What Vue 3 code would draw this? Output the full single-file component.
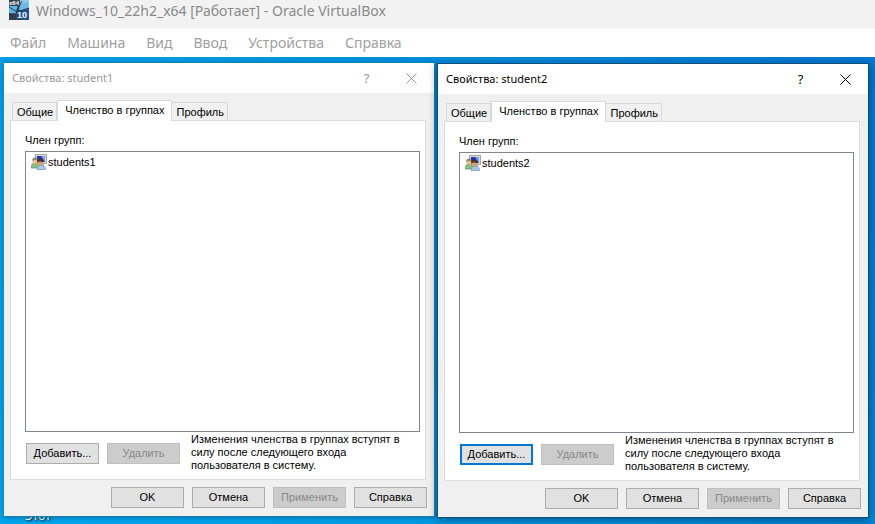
<script setup>
import { ref } from 'vue'

const menu = ['Файл', 'Машина', 'Вид', 'Ввод', 'Устройства', 'Справка']
const tabs = ['Общие', 'Членство в группах', 'Профиль']
const dialogs = ref([
  { user: 'student1', groups: ['students1'], active: false },
  { user: 'student2', groups: ['students2'], active: true }
])
</script>

<template>
  <div class="vm">
    <header class="caption">
      <svg class="vm-icon" viewBox="0 0 20 20" aria-hidden="true">
        <rect width="20" height="20" fill="#2b4a63" />
        <path d="M10 0H20V8L11 10Z" fill="#8cc9ec" />
        <path d="M0 6L9 4L7 13L0 14Z" fill="#5fb4e6" />
        <path d="M11 4L19 2V10H10Z" fill="#6bb8e8" />
        <path d="M0 13L7 14L9 20H0Z" fill="#333c46" />
        <path d="M8 11L20 9V20H7Z" fill="#1c4f94" />
        <path d="M13 1L7 12M0 7L8 12L20 8M8 12L10 20" stroke="#25384a" stroke-width="1" fill="none" />
        <rect width="11" height="6" fill="#39434d" />
        <text x="0" y="5" class="icon-arch">x64</text>
        <text x="8" y="18" class="icon-ver">10</text>
      </svg>
      <h1>Windows_10_22h2_x64 [Работает] - Oracle VirtualBox</h1>
    </header>
    <nav class="menu">
      <a v-for="m in menu" :key="m" href="#">{{ m }}</a>
    </nav>
    <main class="desktop">
      <span class="shortcut">Этот</span>
      <section
        v-for="d in dialogs"
        :key="d.user"
        class="dialog"
        :class="{ active: d.active }"
        role="dialog"
        :aria-labelledby="d.user + '-title'"
      >
        <div class="title-bar">
          <h2 :id="d.user + '-title'">Свойства: {{ d.user }}</h2>
          <button class="title-btn" type="button" aria-label="Справка по окну">?</button>
          <button class="title-btn" type="button" aria-label="Закрыть">
            <svg viewBox="0 0 11 11" aria-hidden="true"><path d="M.5.5L10.5 10.5M10.5.5L.5 10.5" /></svg>
          </button>
        </div>
        <div class="content">
          <div class="tabs" role="tablist">
            <button
              v-for="(t, i) in tabs"
              :key="t"
              type="button"
              role="tab"
              class="tab"
              :class="{ selected: i === 1 }"
              :aria-selected="i === 1"
            >{{ t }}</button>
          </div>
          <div class="panel" role="tabpanel">
            <div :id="d.user + '-label'" class="label">Член групп:</div>
            <ul class="list" role="listbox" :aria-labelledby="d.user + '-label'">
              <li v-for="g in d.groups" :key="g" role="option">
                <svg viewBox="0 0 16 16" aria-hidden="true">
                  <rect x="4.500" y=".5" width="11" height="9" fill="#dcd9cf" stroke="#aaa89f" />
                  <rect x="6" y="2" width="8" height="6" fill="#1c36b8" />
                  <path d="M10 2H14V8Z" fill="#7fa0ee" />
                  <path d="M8 10H13V12H8Z" fill="#b9b6ab" />
                  <path d="M0 14Q0 9 4 9Q8 9 8 14Z" fill="#8cc07c" stroke="#4d8a48" stroke-width=".6" />
                  <circle cx="4" cy="7" r="2.600" fill="#e3c193" />
                  <path d="M1.300 7Q1 3.500 4 3.500Q7 3.500 6.800 6.500Q4 5 1.300 7Z" fill="#8f8468" />
                  <path d="M6 15.500Q6 11 10 11Q14.500 11 14.500 15.500Z" fill="#a5c8ea" stroke="#5f8ab8" stroke-width=".6" />
                  <circle cx="9" cy="8.500" r="2.700" fill="#d8a066" />
                  <path d="M6.200 8.500Q5.500 4.500 9 4.600Q12.500 4.800 11.800 8.500Q9 6.500 6.200 8.500Z" fill="#4b3623" />
                </svg>
                <span>{{ g }}</span>
              </li>
            </ul>
            <div class="actions">
              <button type="button" class="btn" :class="{ focused: d.active }">Добавить...</button>
              <button type="button" class="btn" disabled>Удалить</button>
              <p>Изменения членства в группах вступят в силу после следующего входа пользователя в систему.</p>
            </div>
          </div>
          <div class="footer">
            <button type="button" class="btn">OK</button>
            <button type="button" class="btn">Отмена</button>
            <button type="button" class="btn" disabled>Применить</button>
            <button type="button" class="btn">Справка</button>
          </div>
        </div>
      </section>
    </main>
  </div>
</template>

<style>
body {
  background: #0095e0;
}
</style>

<style scoped>
.vm {
  display: flex;
  flex-direction: column;
  min-height: 100vh;
  font: 11px/13px "Liberation Sans", sans-serif;
  color: #000;
}
button {
  font: inherit;
  color: inherit;
  margin: 0;
}
.caption {
  display: flex;
  align-items: flex-start;
  gap: 7px;
  height: 29px;
  padding-left: 9px;
  background: #f2f2f2;
}
.vm-icon {
  width: 20px;
  height: 20px;
}
.icon-arch {
  font: bold 6px "Liberation Sans", sans-serif;
  fill: #fff;
}
.icon-ver {
  font: bold 9px "Liberation Sans", sans-serif;
  fill: #fff;
}
h1 {
  margin: 0;
  font: 14px/22px "Noto Sans", sans-serif;
  color: #8a8a8a;
  white-space: nowrap;
}
.menu {
  display: flex;
  gap: 21px;
  height: 28px;
  padding-left: 10px;
  background: #fff;
}
.menu a {
  font: 14px/28px "Noto Sans", sans-serif;
  color: #a0a0a0;
  text-decoration: none;
}
.desktop {
  position: relative;
  flex: 1;
  display: grid;
  grid-template-columns: 1fr 1fr;
  gap: 2px;
  align-items: start;
  padding: 5px 6px 6px 3px;
  overflow: hidden;
  background: linear-gradient(55deg, #00a6ee 0%, #0098e2 45%, #0078d2 100%);
}
.shortcut {
  position: absolute;
  left: 25px;
  top: 451px;
  font: 12px/16px "Noto Sans", sans-serif;
  color: #fff;
  text-shadow: 1px 1px 2px #000;
}
.dialog {
  position: relative;
  border: 1px solid #1b7fae;
  border-left-color: #1192d2;
  background: #f0f0f0;
  box-shadow: 0 1px 4px rgba(0, 30, 60, 0.35);
}
.dialog.active {
  margin-top: 1px;
  border-color: #0d4f7c;
  box-shadow: 0 2px 8px rgba(0, 20, 50, 0.5);
}
.title-bar {
  display: flex;
  align-items: center;
  height: 30px;
  padding-left: 8px;
  background: #fff;
  color: #999;
}
.active .title-bar {
  color: #000;
}
h2 {
  flex: 1;
  margin: 0;
  font: 11px/16px "Noto Sans", sans-serif;
}
.title-btn {
  display: flex;
  align-items: center;
  justify-content: center;
  width: 45px;
  height: 30px;
  padding: 0;
  border: 0;
  background: none;
  font: 13px/16px "Noto Sans", sans-serif;
}
.title-btn svg {
  width: 11px;
  height: 11px;
  fill: none;
  stroke: currentColor;
}
.content {
  padding: 7px 7px 8px 6px;
}
.tabs {
  display: flex;
  align-items: flex-end;
  padding-left: 2px;
}
.tab {
  height: 18px;
  padding: 1px 3px 0 4px;
  border: 1px solid #d9d9d9;
  border-bottom: 0;
  background: #f0f0f0;
  white-space: nowrap;
}
.tab + .tab {
  border-left: 0;
}
.tab.selected {
  position: relative;
  height: 21px;
  margin-bottom: -1px;
  padding: 0 7px 2px;
  border-left: 1px solid #d9d9d9;
  background: #fff;
}
.panel {
  margin-right: 1px;
  padding: 13px 5px 7px 14px;
  border: 1px solid #dcdcdc;
  background: #fff;
}
.label {
  margin-bottom: 4px;
}
.list {
  min-height: 279px;
  margin: 0;
  padding: 0;
  border: 1px solid #82878f;
  list-style: none;
}
.list li {
  display: flex;
  align-items: center;
  gap: 1px;
  height: 16px;
  padding: 2px 0 0 5px;
}
.list svg {
  width: 16px;
  height: 16px;
}
.actions {
  display: flex;
  align-items: flex-start;
  gap: 8px;
  padding: 1px 12px 0 1px;
}
.actions .btn {
  margin-top: 10px;
}
.actions p {
  flex: 1;
  margin: 0 0 0 3px;
}
.btn {
  box-sizing: border-box;
  width: 73px;
  height: 21px;
  padding: 0;
  border: 1px solid #adadad;
  background: #e1e1e1;
}
.btn:disabled {
  border-color: #bfbfbf;
  background: #ccc;
  color: #888;
}
.btn.focused {
  border: 2px solid #0078d7;
}
.footer {
  display: flex;
  justify-content: flex-end;
  gap: 8px;
  padding-top: 7px;
}
</style>
